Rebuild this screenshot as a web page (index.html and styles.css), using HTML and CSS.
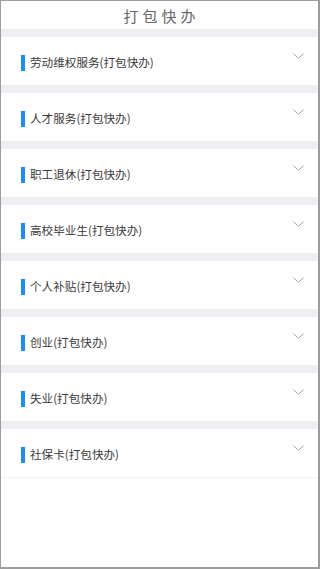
FILE: index.html
```html
<!DOCTYPE html>
<html lang="zh-CN">
<head>
<meta charset="utf-8">
<meta name="viewport" content="width=device-width, initial-scale=1">
<title>打包快办</title>
<link rel="stylesheet" href="styles.css">
</head>
<body>
<div class="page">
  <header class="title-bar"><h1 class="title">打包快办</h1></header>
  <ul class="list">
    <li class="item"><span class="mark"></span><span class="label">劳动维权服务(打包快办)</span><svg class="chev" viewBox="0 0 12 6"><path d="M0.5 0.5 L6 5.5 L11.5 0.5"/></svg></li>
    <li class="item"><span class="mark"></span><span class="label">人才服务(打包快办)</span><svg class="chev" viewBox="0 0 12 6"><path d="M0.5 0.5 L6 5.5 L11.5 0.5"/></svg></li>
    <li class="item"><span class="mark"></span><span class="label">职工退休(打包快办)</span><svg class="chev" viewBox="0 0 12 6"><path d="M0.5 0.5 L6 5.5 L11.5 0.5"/></svg></li>
    <li class="item"><span class="mark"></span><span class="label">高校毕业生(打包快办)</span><svg class="chev" viewBox="0 0 12 6"><path d="M0.5 0.5 L6 5.5 L11.5 0.5"/></svg></li>
    <li class="item"><span class="mark"></span><span class="label">个人补贴(打包快办)</span><svg class="chev" viewBox="0 0 12 6"><path d="M0.5 0.5 L6 5.5 L11.5 0.5"/></svg></li>
    <li class="item"><span class="mark"></span><span class="label">创业(打包快办)</span><svg class="chev" viewBox="0 0 12 6"><path d="M0.5 0.5 L6 5.5 L11.5 0.5"/></svg></li>
    <li class="item"><span class="mark"></span><span class="label">失业(打包快办)</span><svg class="chev" viewBox="0 0 12 6"><path d="M0.5 0.5 L6 5.5 L11.5 0.5"/></svg></li>
    <li class="item"><span class="mark"></span><span class="label">社保卡(打包快办)</span><svg class="chev" viewBox="0 0 12 6"><path d="M0.5 0.5 L6 5.5 L11.5 0.5"/></svg></li>
  </ul>
</div>
</body>
</html>
```

FILE: styles.css
```css
* { box-sizing: border-box; }
html, body {
  margin: 0;
  padding: 0;
  height: 569px;
  background: #fff;
}
body {
  font-family: "Noto Sans CJK SC", "Noto Sans", sans-serif;
  color: #333;
}
.page {
  height: 569px;
  border: 1px solid #9c9c9c;
  border-right-width: 2px;
  border-bottom-width: 2px;
  overflow: hidden;
}
.title-bar {
  height: 28px;
  display: flex;
  align-items: center;
  justify-content: center;
}
.title {
  margin: 0;
  font-size: 15px;
  font-weight: normal;
  color: #666;
  letter-spacing: 4px;
  padding-left: 4px;
  line-height: 1;
}
.list {
  list-style: none;
  margin: 0;
  padding: 0;
}
.item {
  position: relative;
  height: 56px;
  border-top: 8px solid #eeeff2;
  display: flex;
  align-items: center;
  padding-left: 20px;
  padding-top: 3px;
}
.item:last-child {
  border-bottom: 1px solid #f2f2f2;
  height: 57px;
}
.mark {
  width: 4px;
  height: 16px;
  background: #1a8cff;
  margin-right: 5px;
  flex: none;
}
.label {
  font-size: 11.6px;
  color: #3a3a3a;
  line-height: 1;
}
.chev {
  position: absolute;
  right: 14px;
  top: 16px;
  width: 11px;
  height: 6px;
  fill: none;
  stroke: #9a9a9a;
  stroke-width: 1;
}
```
